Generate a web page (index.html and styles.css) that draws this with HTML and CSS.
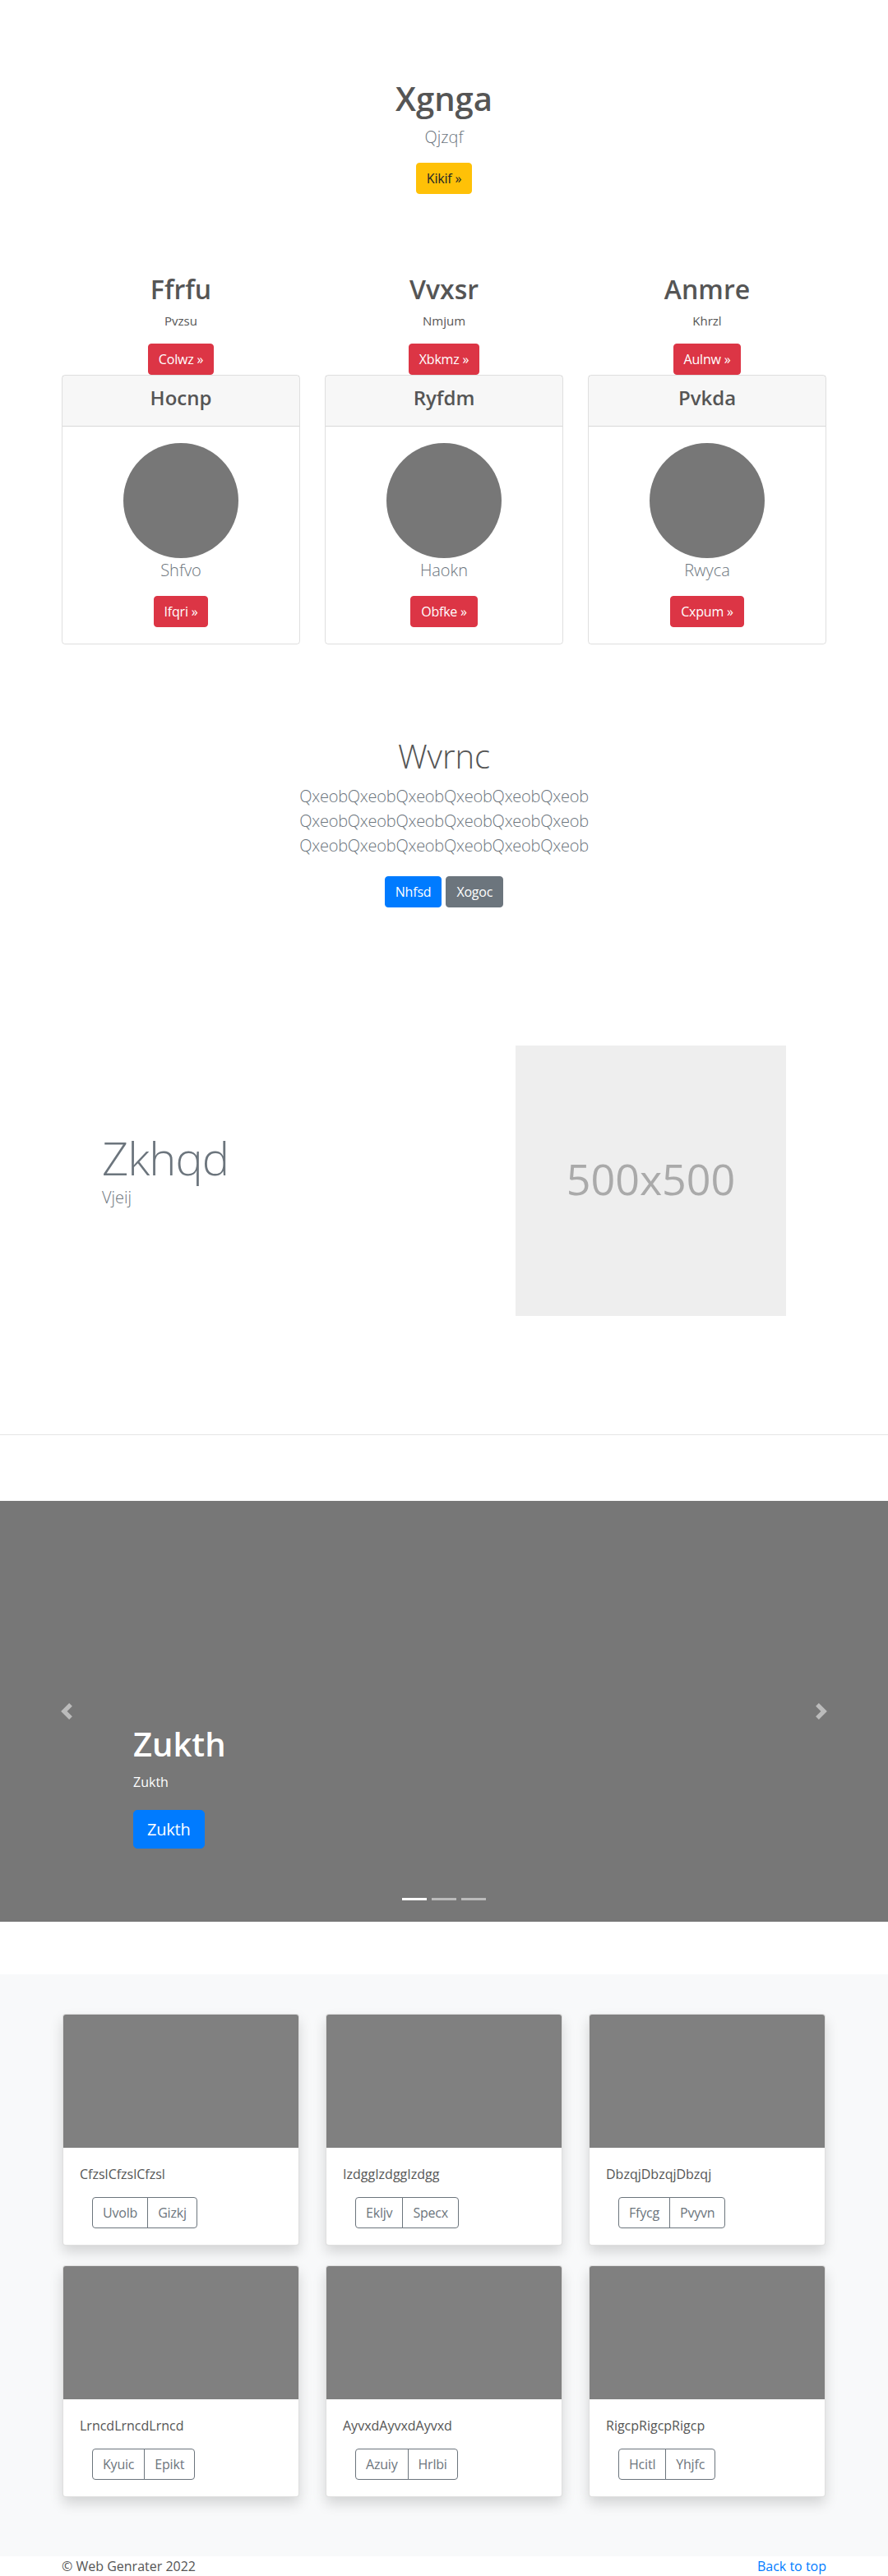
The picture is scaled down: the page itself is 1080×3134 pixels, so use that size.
FILE: index.html
```html
<!DOCTYPE html>
<html lang="en">
<head>
<meta charset="utf-8">
<title>Xgnga</title>
<link rel="stylesheet" href="styles.css">
</head>
<body>
<section class="hero">
  <h1 class="hero-title">Xgnga</h1>
  <p class="lead">Qjzqf</p>
  <div class="actions"><a class="btn btn-warning" href="#">Kikif &raquo;</a></div>
</section>

<section class="container features">
  <div class="feature-col">
    <h2 class="feature-title">Ffrfu</h2>
    <p class="feature-sub">Pvzsu</p>
    <div class="actions"><a class="btn btn-danger" href="#">Colwz &raquo;</a></div>
    <div class="card">
      <div class="card-header"><h4 class="card-title">Hocnp</h4></div>
      <div class="card-body">
        <div class="avatar"></div>
        <p class="lead">Shfvo</p>
        <div class="actions"><a class="btn btn-danger" href="#">Ifqri &raquo;</a></div>
      </div>
    </div>
  </div>
  <div class="feature-col">
    <h2 class="feature-title">Vvxsr</h2>
    <p class="feature-sub">Nmjum</p>
    <div class="actions"><a class="btn btn-danger" href="#">Xbkmz &raquo;</a></div>
    <div class="card">
      <div class="card-header"><h4 class="card-title">Ryfdm</h4></div>
      <div class="card-body">
        <div class="avatar"></div>
        <p class="lead">Haokn</p>
        <div class="actions"><a class="btn btn-danger" href="#">Obfke &raquo;</a></div>
      </div>
    </div>
  </div>
  <div class="feature-col">
    <h2 class="feature-title">Anmre</h2>
    <p class="feature-sub">Khrzl</p>
    <div class="actions"><a class="btn btn-danger" href="#">Aulnw &raquo;</a></div>
    <div class="card">
      <div class="card-header"><h4 class="card-title">Pvkda</h4></div>
      <div class="card-body">
        <div class="avatar"></div>
        <p class="lead">Rwyca</p>
        <div class="actions"><a class="btn btn-danger" href="#">Cxpum &raquo;</a></div>
      </div>
    </div>
  </div>
</section>

<section class="jumbo">
  <h1 class="jumbo-title">Wvrnc</h1>
  <p class="lead jumbo-text">QxeobQxeobQxeobQxeobQxeobQxeob QxeobQxeobQxeobQxeobQxeobQxeob QxeobQxeobQxeobQxeobQxeobQxeob</p>
  <div class="actions"><a class="btn btn-primary" href="#">Nhfsd</a><a class="btn btn-secondary" href="#">Xogoc</a></div>
</section>

<section class="container featurette">
  <div class="featurette-text">
    <h2 class="featurette-heading">Zkhqd</h2>
    <p class="lead featurette-lead">Vjeij</p>
  </div>
  <div class="featurette-media">
    <div class="placeholder">500x500</div>
  </div>
</section>

<hr class="divider">

<section class="carousel">
  <a class="carousel-control prev" href="#" aria-label="Previous">
    <svg viewBox="0 0 8 8" width="20" height="20"><path fill="#fff" d="M5.25 0l-4 4 4 4 1.5-1.5L4.25 4l2.5-2.5L5.25 0z"/></svg>
  </a>
  <div class="carousel-caption">
    <h1 class="caption-title">Zukth</h1>
    <p class="caption-text">Zukth</p>
    <div class="caption-actions"><a class="btn btn-primary btn-lg" href="#">Zukth</a></div>
  </div>
  <a class="carousel-control next" href="#" aria-label="Next">
    <svg viewBox="0 0 8 8" width="20" height="20"><path fill="#fff" d="M2.75 0l-1.5 1.5L3.75 4l-2.5 2.5L2.75 8l4-4-4-4z"/></svg>
  </a>
  <ol class="indicators">
    <li class="active"></li>
    <li></li>
    <li></li>
  </ol>
</section>

<section class="album">
  <div class="album-grid">
    <div class="album-card">
      <div class="album-img"></div>
      <div class="album-body">
        <p class="album-text">CfzslCfzslCfzsl</p>
        <div class="btn-group"><a class="btn btn-outline" href="#">Uvolb</a><a class="btn btn-outline" href="#">Gizkj</a></div>
      </div>
    </div>
    <div class="album-card">
      <div class="album-img"></div>
      <div class="album-body">
        <p class="album-text">IzdggIzdggIzdgg</p>
        <div class="btn-group"><a class="btn btn-outline" href="#">Ekljv</a><a class="btn btn-outline" href="#">Specx</a></div>
      </div>
    </div>
    <div class="album-card">
      <div class="album-img"></div>
      <div class="album-body">
        <p class="album-text">DbzqjDbzqjDbzqj</p>
        <div class="btn-group"><a class="btn btn-outline" href="#">Ffycg</a><a class="btn btn-outline" href="#">Pvyvn</a></div>
      </div>
    </div>
    <div class="album-card">
      <div class="album-img"></div>
      <div class="album-body">
        <p class="album-text">LrncdLrncdLrncd</p>
        <div class="btn-group"><a class="btn btn-outline" href="#">Kyuic</a><a class="btn btn-outline" href="#">Epikt</a></div>
      </div>
    </div>
    <div class="album-card">
      <div class="album-img"></div>
      <div class="album-body">
        <p class="album-text">AyvxdAyvxdAyvxd</p>
        <div class="btn-group"><a class="btn btn-outline" href="#">Azuiy</a><a class="btn btn-outline" href="#">Hrlbi</a></div>
      </div>
    </div>
    <div class="album-card">
      <div class="album-img"></div>
      <div class="album-body">
        <p class="album-text">RigcpRigcpRigcp</p>
        <div class="btn-group"><a class="btn btn-outline" href="#">Hcitl</a><a class="btn btn-outline" href="#">Yhjfc</a></div>
      </div>
    </div>
  </div>
</section>

<footer class="footer">
  <span class="copyright">&copy; Web Genrater 2022</span>
  <a class="back-top" href="#">Back to top</a>
</footer>
</body>
</html>
```

FILE: styles.css
```css
html, body {
  margin: 0;
  padding: 0;
}

body {
  font-family: "Open Sans", "Noto Sans", "DejaVu Sans", sans-serif;
  font-size: 16px;
  line-height: 24px;
  color: #555;
  background: #fff;
}

a { text-decoration: none; }

.container {
  width: 960px;
  margin-left: auto;
  margin-right: auto;
}

/* buttons */
.actions {
  display: flex;
  justify-content: center;
  gap: 5px;
}

.btn {
  display: inline-block;
  font-size: 16px;
  line-height: 24px;
  padding: 6px 12px;
  border: 1px solid transparent;
  border-radius: 4px;
  font-weight: 400;
  white-space: nowrap;
  letter-spacing: -0.2px;
}

.btn-warning { background: #ffc107; border-color: #ffc107; color: #212529; }
.btn-danger { background: #dc3545; border-color: #dc3545; color: #fff; }
.btn-primary { background: #007bff; border-color: #007bff; color: #fff; }
.btn-secondary { background: #6c757d; border-color: #6c757d; color: #fff; }

.btn-lg {
  font-size: 20px;
  line-height: 29px;
  padding: 8px 16px;
  border-radius: 5px;
}

.lead {
  font-size: 20px;
  line-height: 30px;
  font-weight: 300;
  color: #6c757d;
  margin: 0 0 16px;
}

/* hero */
.hero {
  text-align: center;
  padding-top: 96px;
}

.hero-title {
  margin: 0 0 8px;
  font-size: 40px;
  line-height: 48px;
  font-weight: 600;
  color: #555;
}

/* features */
.features {
  display: grid;
  grid-template-columns: repeat(3, 320px);
  padding-top: 97px;
  text-align: center;
}

.feature-col {
  padding: 0 15px;
}

.feature-title {
  margin: 0 0 8px;
  font-size: 32px;
  line-height: 38px;
  font-weight: 600;
  color: #555;
}

.feature-sub {
  margin: 0 0 17px;
  font-size: 15px;
  line-height: 22px;
  color: #555;
}

.card {
  border: 1px solid rgba(0, 0, 0, 0.125);
  border-radius: 4px;
  text-align: center;
}

.card-header {
  background: rgba(0, 0, 0, 0.03);
  padding: 12px 20px;
  border-bottom: 1px solid rgba(0, 0, 0, 0.125);
}

.card-title {
  margin: 0 0 8px;
  font-size: 24px;
  line-height: 29px;
  font-weight: 600;
  color: #555;
}

.card-body {
  padding: 20px;
}

.avatar {
  width: 140px;
  height: 140px;
  border-radius: 50%;
  background: #777;
  margin: 0 auto;
}

/* jumbo */
.jumbo {
  text-align: center;
  margin-top: 112px;
}

.jumbo-title {
  margin: 0 0 10px;
  font-size: 40px;
  line-height: 48px;
  font-weight: 300;
  color: #555;
}

.jumbo-text {
  width: 450px;
  margin: 0 auto 22px;
  letter-spacing: -0.25px;
}

/* featurette */
.featurette {
  display: flex;
  align-items: center;
  margin-top: 168px;
}

.featurette-text {
  width: 480px;
  box-sizing: border-box;
  padding-left: 64px;
}

.featurette-heading {
  margin: 0;
  font-size: 56px;
  line-height: 67px;
  font-weight: 300;
  color: #6c757d;
  letter-spacing: -1px;
}

.featurette-lead {
  margin-bottom: 26px;
}

.featurette-media {
  width: 480px;
}

.placeholder {
  width: 329px;
  height: 329px;
  margin-left: 87px;
  background: #eee;
  color: #aaa;
  font-size: 52px;
  line-height: 60px;
  display: flex;
  align-items: center;
  justify-content: center;
  padding-bottom: 6px;
  box-sizing: border-box;
}

.divider {
  margin: 144px 0 80px;
  border: 0;
  border-top: 1px solid #e5e5e5;
  height: 0;
}

/* carousel */
.carousel {
  position: relative;
  height: 512px;
  background: #777;
}

.carousel-control {
  position: absolute;
  top: 0;
  bottom: 0;
  width: 15%;
  display: flex;
  align-items: center;
  justify-content: center;
  opacity: 0.5;
}

.carousel-control.prev { left: 0; }
.carousel-control.next { right: 0; }

.carousel-caption {
  position: absolute;
  left: 162px;
  top: 272px;
  color: #fff;
}

.caption-title {
  margin: 0 0 10px;
  font-size: 40px;
  line-height: 48px;
  font-weight: 600;
}

.caption-text {
  margin: 0 0 22px;
}

.caption-actions {
  display: flex;
}

.indicators {
  position: absolute;
  left: 0;
  right: 0;
  bottom: 26px;
  margin: 0;
  padding: 0;
  list-style: none;
  display: flex;
  justify-content: center;
}

.indicators li {
  width: 30px;
  height: 3px;
  margin: 0 3px;
  background: #fff;
  opacity: 0.5;
}

.indicators li.active { opacity: 1; }

/* album */
.album {
  margin-top: 64px;
  background: #f8f9fa;
  padding: 48px 0 72px;
}

.album-grid {
  width: 928px;
  margin: 0 auto;
  display: grid;
  grid-template-columns: repeat(3, 288px);
  column-gap: 32px;
  row-gap: 24px;
}

.album-card {
  background: #fff;
  border: 1px solid rgba(0, 0, 0, 0.125);
  border-radius: 4px;
  box-shadow: 0 8px 16px rgba(0, 0, 0, 0.15);
  overflow: hidden;
}

.album-img {
  height: 162px;
  background: #808080;
}

.album-body {
  padding: 20px;
}

.album-text {
  margin: 0 0 16px;
  color: #555;
}

.btn-group {
  display: flex;
  margin-left: 15px;
}

.btn-outline {
  color: #6c757d;
  border-color: #6c757d;
  background: transparent;
}

.btn-group .btn-outline:first-child {
  border-top-right-radius: 0;
  border-bottom-right-radius: 0;
}

.btn-group .btn-outline + .btn-outline {
  margin-left: -1px;
  border-top-left-radius: 0;
  border-bottom-left-radius: 0;
}

/* footer */
.footer {
  width: 930px;
  margin: 0 auto;
  height: 24px;
  display: flex;
  justify-content: space-between;
  color: #555;
}

.back-top { color: #007bff; }
```
